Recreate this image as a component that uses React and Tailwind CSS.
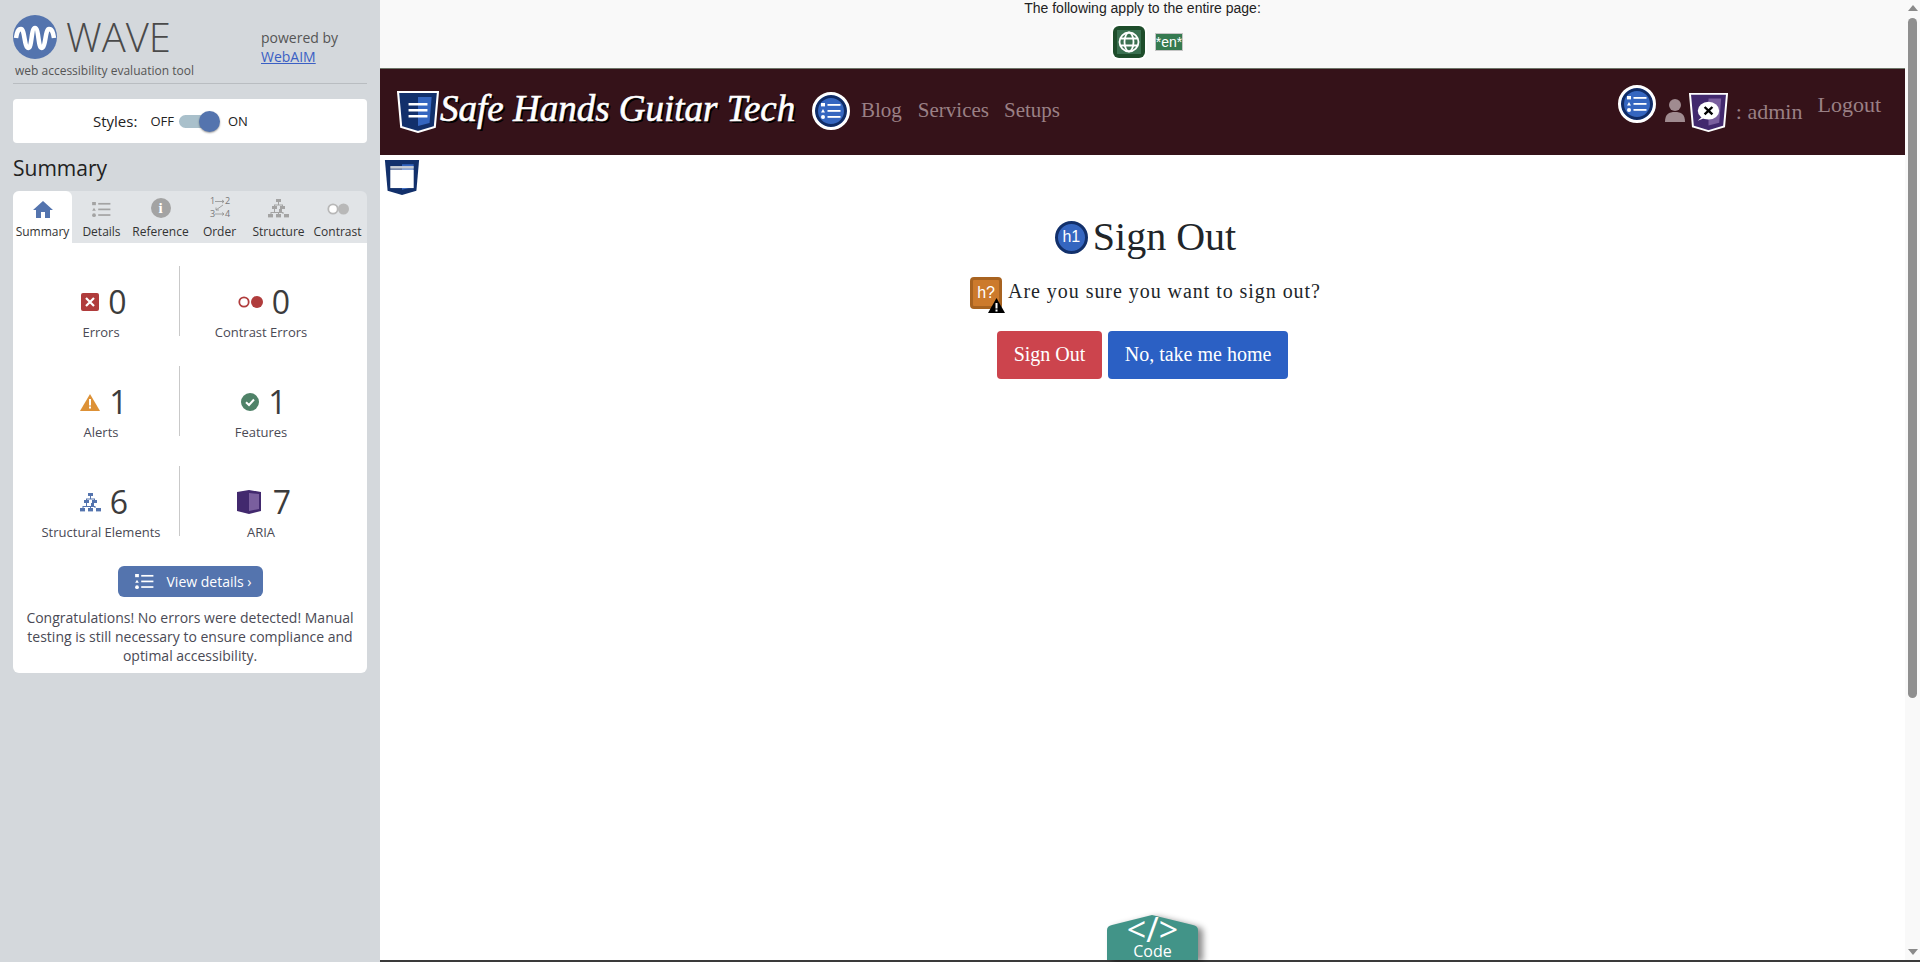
import React from 'react';

const sans = "font-['Open_Sans',sans-serif]";
const serif = "font-['Liberation_Serif',serif]";

const ListIcon = ({ color = '#fff', className = '' }) => (
  <svg viewBox="0 0 20 16" className={className}>
    <rect x="0" y="0" width="4" height="3.4" fill={color} />
    <path d="M2 6 L4 9.4 L0 9.4 Z" fill={color} />
    <circle cx="2" cy="14" r="2" fill={color} />
    <rect x="6.5" y="1" width="13" height="1.8" fill={color} />
    <rect x="6.5" y="7" width="13" height="1.8" fill={color} />
    <rect x="6.5" y="13" width="13" height="1.8" fill={color} />
  </svg>
);

const StructureIcon = ({ color, className = '' }) => (
  <svg viewBox="0 0 21 19" className={className} fill={color}>
    <rect x="8" y="0" width="5" height="3" />
    <rect x="4" y="7" width="5" height="3" />
    <rect x="12" y="7" width="5" height="3" />
    <rect x="0" y="15" width="5" height="3.4" />
    <rect x="8" y="15" width="5" height="3.4" />
    <rect x="16" y="15" width="5" height="3.4" />
    <path d="M10 3h1v2.5h4V7h-1V6.5H7V7H6V5.5h4zM6 10h1v3h4v-3h3v3h1.5v2h-1v-1H11v1h-1v-1H3.500v1h-1v-2H6z" />
  </svg>
);

// round blue "list" landmark badge used in the nav
const ListBadge = () => (
  <div className="flex h-[38px] w-[38px] shrink-0 items-center justify-center rounded-full border-[3px] border-white bg-[#3566c0] shadow-[inset_0_0_0_3px_#102c66]">
    <ListIcon className="h-[16px] w-[20px]" />
  </div>
);

const Shield = ({ className, outer, inner, border = false, children }) => (
  <div className={`relative ${className}`}>
    <svg viewBox="0 0 40 42" preserveAspectRatio="none" className="h-full w-full">
      <path d="M1 1 H39 L36 36 L20 41 L4 36 Z" fill={outer} stroke={border ? '#fff' : 'none'} strokeWidth={border ? 2 : 0} />
      <path d="M20 6 H33 L31 32 L20 35 Z" fill={inner} />
      {children}
    </svg>
  </div>
);

const Stat = ({ icon, value, label, divider, gap = 'gap-[9px]' }) => (
  <div className={`flex h-[70px] flex-col items-center pt-[16px] ${divider ? 'border-r border-[#c9c9c9]' : ''}`}>
    <div className={`ml-[6px] flex h-[40px] items-center ${gap}`}>
      {icon}
      <span className={`${sans} text-[32px] leading-[40px] text-[#3c3c3c]`}>{value}</span>
    </div>
    <span className={`${sans} mt-[1px] whitespace-nowrap text-[13px] leading-[18px] text-[#4a4a55]`}>{label}</span>
  </div>
);

const Tab = ({ label, active, children }) => (
  <div className={`flex h-[52px] w-[59px] flex-col items-center ${active ? 'rounded-t-[6px] bg-white' : ''}`}>
    <div className="flex h-[27px] items-end justify-center">{children}</div>
    <span className={`${sans} mt-[6px] whitespace-nowrap text-[12px] leading-[16px] text-[#333]`}>{label}</span>
  </div>
);

const Sidebar = () => (
  <div className={`flex h-full w-[380px] shrink-0 flex-col bg-[#d4d8dc] px-[13px] ${sans}`}>
    <div className="flex h-[84px] border-b border-[#b9bdc1]">
      <div className="w-[248px]">
        <div className="flex items-center pt-[15px]">
          <svg viewBox="0 0 44 44" className="h-[44px] w-[44px]">
            <circle cx="22" cy="22" r="22" fill="#5474ae" />
            <path d="M3 23 C4 17 5 14 8 14 C12 14 11 33 15.500 33 C19 33 18 13 22 13 C26 13 25 33 28.500 33 C33 33 32 14 36 14 C39 14 40 17 41 23" fill="none" stroke="#fff" strokeWidth="4.500" />
          </svg>
          <span className="ml-[9px] text-[40px] font-light leading-[44px] text-[#4a4a4a]">WAVE</span>
        </div>
        <div className="ml-[2px] mt-[4px] whitespace-nowrap text-[12px] leading-[16px] text-[#555]">web accessibility evaluation tool</div>
      </div>
      <div className="pt-[28px] text-[14px] leading-[19px] text-[#555]">
        <div>powered by</div>
        <a className="text-[#3a5fc4] underline">WebAIM</a>
      </div>
    </div>

    <div className="mt-[15px] flex h-[44px] items-center rounded-[4px] bg-white pl-[80px] pt-[1px] text-[#222]">
      <span className="text-[15px]">Styles:</span>
      <span className="ml-[13px] text-[13px]">OFF</span>
      <div className="relative ml-[5px] h-[13px] w-[39px] rounded-full bg-[#a9c0cb]">
        <div className="absolute right-[-2px] top-[-4px] h-[21px] w-[21px] rounded-full bg-[#5474ae] shadow-[0_1px_2px_rgba(0,0,0,0.4)]" />
      </div>
      <span className="ml-[10px] text-[13px]">ON</span>
    </div>

    <h2 className="mt-[11px] h-[37px] text-[21px] leading-[28px] text-[#222]">Summary</h2>

    <div className="flex h-[52px] rounded-t-[6px] bg-[#e1e4e7]">
      <Tab label="Summary" active>
        <svg viewBox="0 0 20 17" className="h-[17px] w-[20px]" fill="#5474ae">
          <path d="M10 0 L20 9 H17 V17 H12 V11 H8 V17 H3 V9 H0 Z" />
        </svg>
      </Tab>
      <Tab label="Details">
        <ListIcon color="#a3a3a3" className="mb-[1px] h-[15px] w-[19px]" />
      </Tab>
      <Tab label="Reference">
        <div className={`${serif} flex h-[20px] w-[20px] items-center justify-center rounded-full bg-[#a3a3a3] text-[15px] font-bold text-white`}>i</div>
      </Tab>
      <Tab label="Order">
        <svg viewBox="0 0 20 21" className="h-[21px] w-[20px] overflow-visible" stroke="#8f8f8f" strokeWidth="0.8" fill="none">
          <text x="0" y="7" fontSize="9" fill="#777" stroke="none" fontFamily="Open Sans">1</text>
          <text x="15" y="7" fontSize="9" fill="#777" stroke="none" fontFamily="Open Sans">2</text>
          <text x="0" y="20" fontSize="9" fill="#777" stroke="none" fontFamily="Open Sans">3</text>
          <text x="15" y="20" fontSize="9" fill="#777" stroke="none" fontFamily="Open Sans">4</text>
          <path d="M5 4.500H14M12 3l2 1.500-2 1.500M5 17H14M12 15.500l2 1.500-2 1.500M13 8L6 13M6 10.500V13H9" />
        </svg>
      </Tab>
      <Tab label="Structure">
        <StructureIcon color="#a3a3a3" className="h-[19px] w-[21px]" />
      </Tab>
      <Tab label="Contrast">
        <svg viewBox="0 0 22 12" className="mb-[3px] h-[12px] w-[22px]">
          <circle cx="6" cy="6" r="4.700" fill="#fff" stroke="#b8b8b8" strokeWidth="1.800" />
          <circle cx="16.500" cy="6" r="5.500" fill="#b8b8b8" />
        </svg>
      </Tab>
    </div>

    <div className="h-[430px] rounded-b-[6px] bg-white pt-[23px]">
      <div className="ml-[10px] grid grid-cols-[157px_162px] gap-y-[30px]">
        <Stat
          divider
          value="0"
          label="Errors"
          icon={
            <div className="flex h-[18px] w-[18px] items-center justify-center rounded-[2px] bg-[#b03c3c]">
              <svg viewBox="0 0 10 10" className="h-[10px] w-[10px]"><path d="M1 1L9 9M9 1L1 9" stroke="#fff" strokeWidth="2.200" /></svg>
            </div>
          }
        />
        <Stat
          value="0"
          label="Contrast Errors"
          icon={
            <svg viewBox="0 0 25 12" className="h-[12px] w-[25px]">
              <circle cx="6" cy="6" r="4.700" fill="#fff" stroke="#b03c3c" strokeWidth="1.800" />
              <circle cx="19" cy="6" r="6" fill="#b03c3c" />
            </svg>
          }
        />
        <Stat
          divider
          value="1"
          label="Alerts"
          icon={
            <svg viewBox="0 0 20 17" className="h-[17px] w-[20px]">
              <path d="M10 0L20 17H0Z" fill="#dd9136" />
              <rect x="9" y="5" width="2" height="6.500" fill="#fff" />
              <rect x="9" y="12.500" width="2" height="2" fill="#fff" />
            </svg>
          }
        />
        <Stat
          value="1"
          label="Features"
          icon={
            <svg viewBox="0 0 18 18" className="h-[18px] w-[18px]">
              <circle cx="9" cy="9" r="9" fill="#4f8268" />
              <path d="M5 9.200L8 12L13 6.500" stroke="#fff" strokeWidth="2" fill="none" />
            </svg>
          }
        />
        <Stat
          divider
          value="6"
          label="Structural Elements"
          icon={<StructureIcon color="#5474ae" className="h-[19px] w-[21px]" />}
        />
        <Stat
          value="7"
          label="ARIA"
          gap="gap-[12px]"
          icon={
            <svg viewBox="0 0 24 24" className="h-[24px] w-[24px]">
              <path d="M0 2L12 0L24 2V21L12 24L0 21Z" fill="#42296e" />
              <path d="M12 3L22 4V19L12 21Z" fill="#7a5f9e" />
            </svg>
          }
        />
      </div>
      <div className="mt-[30px] flex justify-center">
        <div className="flex h-[31px] w-[145px] items-center rounded-[6px] bg-[#5474ae] pl-[17px] text-[14px] text-white">
          <ListIcon className="h-[15px] w-[19px]" />
          <span className="ml-[13px] whitespace-nowrap">View details ›</span>
        </div>
      </div>
      <p className="mt-[11px] px-[10px] text-center text-[14px] leading-[19px] text-[#4a4a55]">
        Congratulations! No errors were detected! Manual testing is still necessary to ensure compliance and optimal accessibility.
      </p>
    </div>
  </div>
);

const TopStrip = () => (
  <div className="flex h-[69px] shrink-0 flex-col items-center border-b border-[#6d7568] bg-[#f9f9f9]">
    <div className="font-['Liberation_Sans',sans-serif] text-[14px] leading-[16px] text-[#222]">The following apply to the entire page:</div>
    <div className="ml-[11px] mt-[10px] flex items-center gap-[10px]">
      <div className="flex h-[32px] w-[32px] items-center justify-center rounded-[6px] bg-[#1e4d2b] shadow-[0_0_0_2px_#fff]">
        <div className="flex h-[24px] w-[24px] items-center justify-center bg-[#3a7050]">
          <svg viewBox="0 0 22 22" className="h-[22px] w-[22px]" fill="none" stroke="#fff" strokeWidth="1.800">
            <circle cx="11" cy="11" r="9.500" />
            <ellipse cx="11" cy="11" rx="4.500" ry="9.500" />
            <path d="M2 7.500H20M2 14.500H20" />
          </svg>
        </div>
      </div>
      <div className="mb-[1px] border border-[#c5c5c5] bg-[#357a50] font-['Liberation_Sans',sans-serif] text-[14px] leading-[16px] text-white">*en*</div>
    </div>
  </div>
);

const NavBar = () => (
  <div className={`flex h-[86px] shrink-0 bg-[#351219] pl-[17px] pr-[24px] ${serif}`}>
    <div className="flex items-center">
      <Shield className="h-[42px] w-[42px]" outer="#12306b" inner="#3566c0" border>
        <rect x="11" y="12" width="18" height="2.500" fill="#fff" />
        <rect x="11" y="18" width="18" height="2.500" fill="#fff" />
        <rect x="11" y="24" width="18" height="2.500" fill="#fff" />
      </Shield>
      <span className="mb-[6px] ml-[1px] w-[372px] whitespace-nowrap text-[37px] italic leading-[50px] text-white [-webkit-text-stroke:0.6px_#fff] [text-shadow:2px_2px_0_#000]">
        Safe Hands Guitar Tech
      </span>
    </div>
    <div className="flex items-center pb-[2px]">
      <ListBadge />
      <span className="ml-[11px] text-[21px] text-[#9a8085]">Blog</span>
      <span className="ml-[16px] text-[21px] text-[#9a8085]">Services</span>
      <span className="ml-[15px] text-[21px] text-[#9a8085]">Setups</span>
    </div>
    <div className="ml-auto flex items-start pt-[16px]">
      <ListBadge />
      <svg viewBox="0 0 20 23" className="ml-[9px] mt-[14px] h-[23px] w-[20px]" fill="#a08b90">
        <circle cx="10" cy="6" r="6" />
        <path d="M0 23 C0 15 4 13 10 13 C16 13 20 15 20 23Z" />
      </svg>
      <Shield className="ml-[4px] mt-[8px] h-[39px] w-[39px]" outer="#42296e" inner="#7a5f9e" border>
        <ellipse cx="20" cy="19" rx="11" ry="9.500" fill="#fff" />
        <path d="M9 30L14 25L16 27Z" fill="#fff" />
        <path d="M16 15L24 23M24 15L16 23" stroke="#000" strokeWidth="2.400" />
      </Shield>
      <span className="ml-[8px] mt-[14px] text-[22px] leading-[26px] text-[#9a8085]">: admin</span>
      <span className="ml-[15px] mt-[7px] text-[22px] leading-[26px] text-[#9a8085]">Logout</span>
    </div>
  </div>
);

const Content = () => (
  <div className={`relative flex-1 ${serif}`}>
    {/* WAVE landmark marker */}
    <div className="absolute left-[4px] top-[4px]">
      <Shield className="h-[37px] w-[36px]" outer="#12306b" inner="#3566c0">
        <rect x="7" y="8" width="26" height="3" fill="#c9cdd4" />
        <rect x="7" y="12" width="26" height="21" fill="#fff" />
      </Shield>
    </div>
    <div className="flex flex-col items-center pt-[64px]">
      <div className="ml-[6px] flex h-[36px] items-center gap-[5px]">
        <div className="flex h-[33px] w-[33px] items-center justify-center rounded-full border-[3px] border-[#12306b] bg-[#3566c0] font-['Liberation_Sans',sans-serif] text-[16px] text-white">h1</div>
        <h1 className="text-[40px] leading-[36px] text-[#212529]">Sign Out</h1>
      </div>
      <div className="ml-[6px] mt-[20px] flex h-[36px] items-center gap-[6px]">
        <div className="relative h-[32px] w-[32px] rounded-[4px] border-[3px] border-[#a86320] bg-[#cc7a2c] text-center font-['Liberation_Sans',sans-serif] text-[16px] leading-[26px] text-white">
          h?
          <svg viewBox="0 0 17 15" className="absolute bottom-[-7px] right-[-6px] h-[15px] w-[17px]">
            <path d="M8.500 0L17 15H0Z" fill="#000" />
            <rect x="7.500" y="5" width="2" height="5.500" fill="#fff" />
            <rect x="7.500" y="11.500" width="2" height="2" fill="#fff" />
          </svg>
        </div>
        <p className="mb-[4px] text-[20px] leading-[30px] tracking-[0.95px] text-[#212529]">Are you sure you want to sign out?</p>
      </div>
      <div className="mt-[20px] flex gap-[6px]">
        <div className="flex h-[48px] w-[105px] items-center justify-center rounded-[4px] bg-[#cc444d] pb-[3px] text-[20px] text-white">Sign Out</div>
        <div className="flex h-[48px] w-[180px] items-center justify-center rounded-[4px] bg-[#2b60c4] pb-[3px] text-[20px] text-white">No, take me home</div>
      </div>
    </div>
    {/* floating code tab */}
    <div className="absolute bottom-0 left-[727px] h-[45px] w-[91px] text-center text-white">
      <svg viewBox="0 0 91 45" className="absolute inset-0 h-full w-full overflow-visible drop-shadow-[5px_2px_3px_rgba(0,0,0,0.45)]">
        <path d="M0 15 Q0 11 5 10 L45 0 L86 10 Q91 11 91 15 V45 H0 Z" fill="#429488" />
      </svg>
      <div className={`relative ${sans} text-[34px] leading-[28px]`}>&lt;/&gt;</div>
      <div className={`relative ${sans} text-[16px] leading-[17px]`}>Code</div>
    </div>
  </div>
);

const Scrollbar = () => (
  <div className="flex h-full w-[15px] shrink-0 flex-col items-center bg-[#f9f9f9]">
    <div className="mt-[5px] h-0 w-0 border-x-[5px] border-b-[6px] border-x-transparent border-b-[#8a8a8a]" />
    <div className="mt-[7px] h-[680px] w-[9px] rounded-full bg-[#8f8f8f]" />
    <div className="mt-auto mb-[5px] h-0 w-0 border-x-[5px] border-t-[6px] border-x-transparent border-t-[#8a8a8a]" />
  </div>
);

export default function App() {
  return (
    <div className="flex h-[962px] w-[1920px] overflow-hidden bg-white">
      <Sidebar />
      <div className="flex flex-1 flex-col border-b-2 border-[#3a3a3a]">
        <div className="flex flex-1">
          <div className="flex flex-1 flex-col">
            <TopStrip />
            <NavBar />
            <Content />
          </div>
          <Scrollbar />
        </div>
      </div>
    </div>
  );
}
